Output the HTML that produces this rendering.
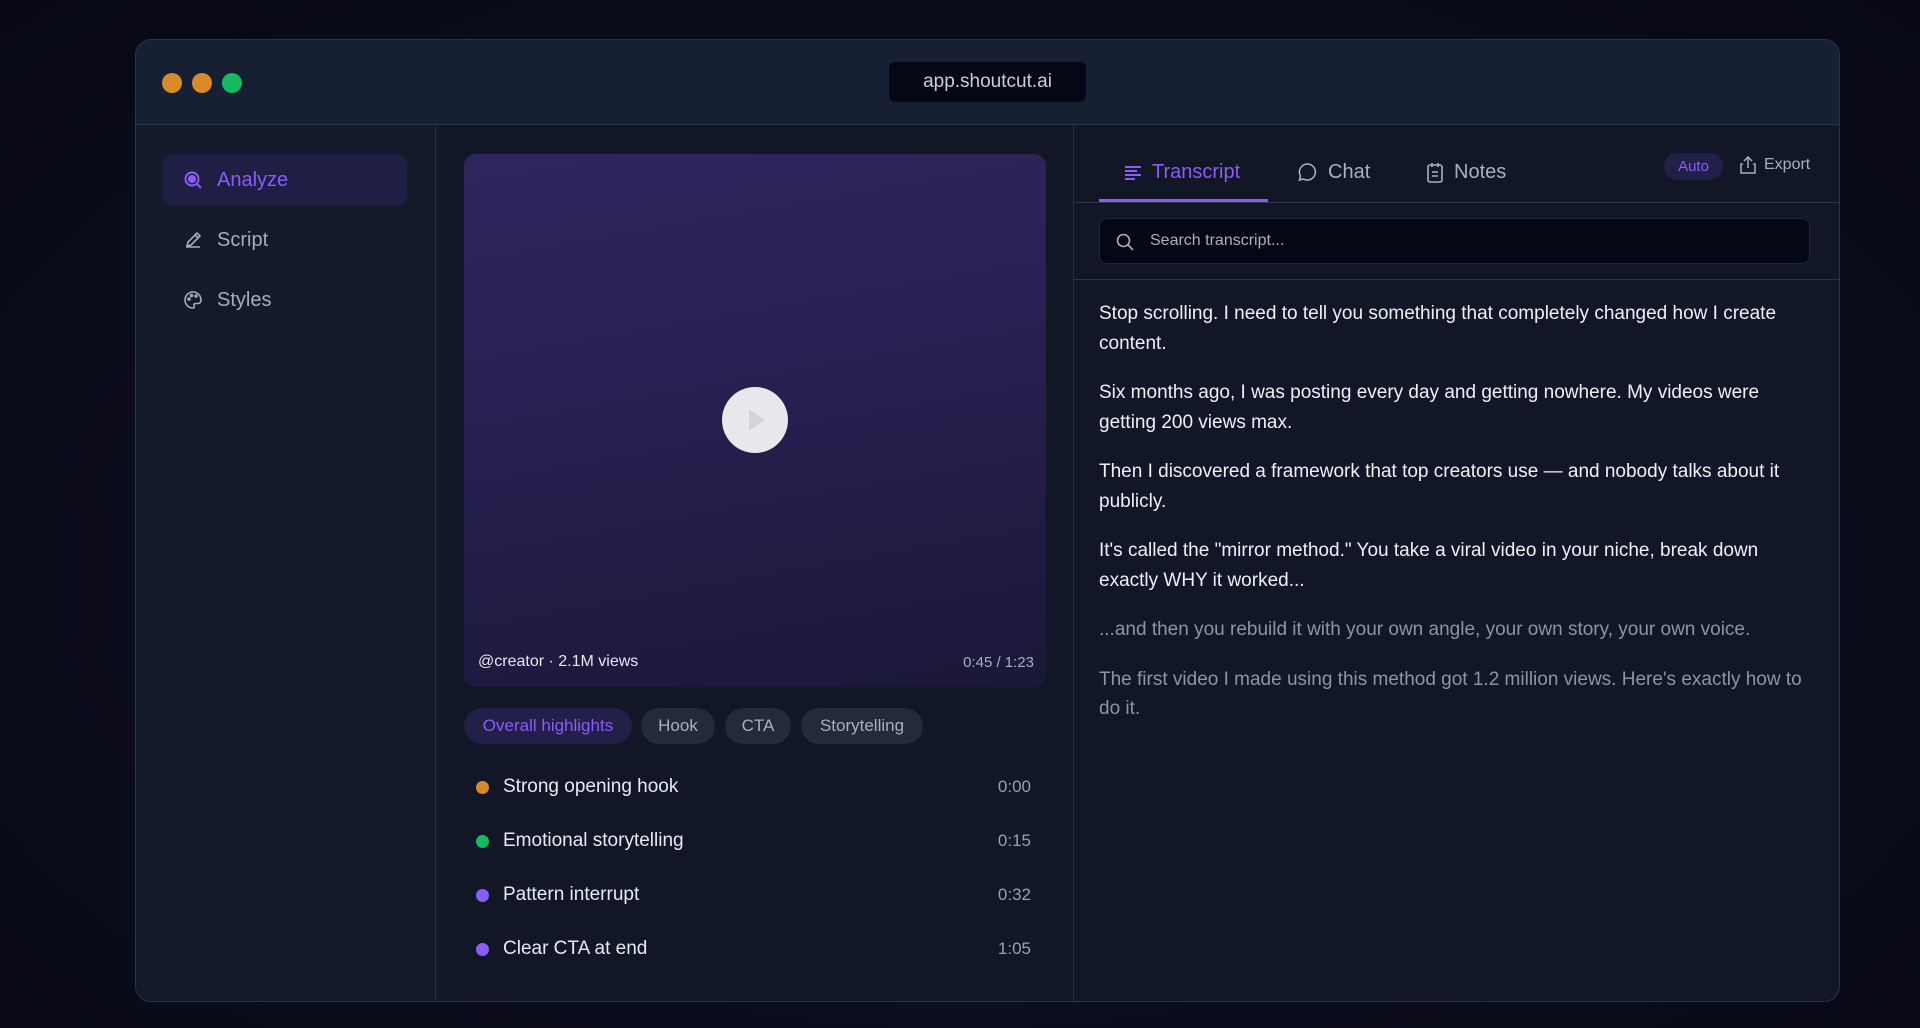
<!DOCTYPE html>
<html><head><meta charset="utf-8"><style>
*{box-sizing:border-box;margin:0;padding:0}
body{width:1920px;height:1028px;overflow:hidden;background:radial-gradient(ellipse at 50% 55%,#141530 0%,#0c0d1c 60%,#080914 100%);font-family:"Liberation Sans",sans-serif;position:relative}
.win{position:absolute;left:135px;top:39px;width:1705px;height:963px;border:1px solid #2a3346;border-radius:16px;background:#111726;overflow:hidden}
.tb{position:absolute;left:0;top:0;right:0;height:85px;background:#172033;border-bottom:1px solid #2c354a}
.dot{position:absolute;top:33px;width:20px;height:20px;border-radius:50%}
.url{position:absolute;left:753px;top:22px;width:197px;height:40px;background:#050814;border-radius:6px;color:#c9ced8;font-size:19px;text-align:center;line-height:40px}
.side{position:absolute;left:0;top:86px;width:300px;bottom:0;background:#131a29;border-right:1px solid #272f42}
.item{position:absolute;left:27px;width:244px;height:52px;border-radius:10px;font-size:20px;color:#a7adba;display:flex;align-items:center;padding-left:20px;gap:14px}
.item.act{background:#1f1f45;color:#8b5cf6}
.mid{position:absolute;left:300px;top:86px;width:638px;bottom:0;border-right:1px solid #272f42}
.video{position:absolute;left:28px;top:28px;width:582px;height:533px;border-radius:12px;background:linear-gradient(170deg,#30265f 0%,#271f50 45%,#1a1838 100%)}
.play{position:absolute;left:258px;top:233px;width:66px;height:66px;border-radius:50%;background:#e8e8ec}
.play:after{content:"";position:absolute;left:27px;top:22px;border-left:16px solid #d4d4da;border-top:11px solid transparent;border-bottom:11px solid transparent}
.cap{position:absolute;bottom:16px;font-size:16px;color:#e6e8ee}
.chip{position:absolute;top:582px;height:36px;border-radius:18px;background:#232a3a;color:#a9afbb;font-size:17px;line-height:36px;text-align:center}
.hl{position:absolute;left:40px;width:555px;font-size:19px;color:#e8eaf0;display:flex;align-items:center}
.hl i{width:13px;height:13px;border-radius:50%;margin-right:14px;display:inline-block}
.hl span.t{margin-left:auto;color:#9aa0ad;font-size:17px}
.right{position:absolute;left:938px;top:86px;right:0;bottom:0}
.tab{position:absolute;top:35px;font-size:20px;color:#a9afbb;display:flex;align-items:center;gap:10px}
p{font-size:19px;line-height:29.5px;color:#eef0f5;margin-bottom:20px}
p.dim{color:#8e94a2}
</style></head><body>
<div class="win">
 <div class="tb">
  <div class="dot" style="left:26px;background:#d98a2b"></div>
  <div class="dot" style="left:56px;background:#d98a2b"></div>
  <div class="dot" style="left:86px;background:#16b860"></div>
  <div class="url">app.shoutcut.ai</div>
 </div>
 <div class="side">
  <div class="item act" style="top:28px"><svg width="20" height="20" viewBox="0 0 20 20" fill="none" stroke="#8b5cf6" stroke-width="2"><circle cx="9" cy="9" r="6.5"/><circle cx="9" cy="9" r="3" fill="#8b5cf6"/><path d="M14 14l4 4"/></svg>Analyze</div>
  <div class="item" style="top:88px"><svg width="20" height="20" viewBox="0 0 20 20" fill="none" stroke="#a7adba" stroke-width="1.6"><path d="M3 17h14M4 16l1-4 9-9 3 3-9 9z M12 5l3 3"/></svg>Script</div>
  <div class="item" style="top:148px"><svg width="20" height="20" viewBox="0 0 20 20" fill="none" stroke="#a7adba" stroke-width="1.6"><path d="M10 2a8 8 0 1 0 0 16c1.5 0 1.5-1.5 1-2.5s0-2 1.5-2H15a3 3 0 0 0 3-3C18 5.5 14.5 2 10 2z"/><circle cx="6" cy="9" r="1"/><circle cx="8.5" cy="5.5" r="1"/><circle cx="13" cy="6" r="1"/></svg>Styles</div>
 </div>
 <div class="mid">
  <div class="video"><div class="play"></div>
   <div class="cap" style="left:14px">@creator · 2.1M views</div>
   <div class="cap" style="right:12px;color:#a9afbb;font-size:15px">0:45 / 1:23</div>
  </div>
  <div class="chip" style="left:28px;width:168px;background:#221f48;color:#8b5cf6">Overall highlights</div>
  <div class="chip" style="left:205px;width:74px">Hook</div>
  <div class="chip" style="left:289px;width:66px">CTA</div>
  <div class="chip" style="left:365px;width:122px">Storytelling</div>
  <div class="hl" style="top:650px"><i style="background:#d98a2b"></i>Strong opening hook<span class="t">0:00</span></div>
  <div class="hl" style="top:704px"><i style="background:#16b860"></i>Emotional storytelling<span class="t">0:15</span></div>
  <div class="hl" style="top:758px"><i style="background:#8b5cf6"></i>Pattern interrupt<span class="t">0:32</span></div>
  <div class="hl" style="top:812px"><i style="background:#8b5cf6"></i>Clear CTA at end<span class="t">1:05</span></div>
 </div>
 <div class="right">
  <div class="tab" style="left:50px;color:#8b5cf6"><svg width="18" height="16" viewBox="0 0 18 16" stroke="#8b5cf6" stroke-width="2"><path d="M1 2h16M1 6h12M1 10h16M1 14h10"/></svg>Transcript</div>
  <div style="position:absolute;left:25px;top:73px;width:169px;height:3px;background:#8b5cf6"></div>
  <div class="tab" style="left:223px"><svg width="21" height="21" viewBox="0 0 21 21" fill="none" stroke="#a9afbb" stroke-width="1.6"><path d="M10.5 2a8 8 0 1 1-4 15l-4 1 1-4a8 8 0 0 1 7-12z"/></svg>Chat</div>
  <div class="tab" style="left:352px"><svg width="18" height="21" viewBox="0 0 18 21" fill="none" stroke="#a9afbb" stroke-width="1.6"><rect x="2" y="3" width="14" height="17" rx="2"/><path d="M6 1v4M12 1v4M6 10h6M6 14h6"/></svg>Notes</div>
  <div style="position:absolute;left:590px;top:27px;width:59px;height:27px;border-radius:14px;background:#221f48;color:#8b5cf6;font-size:15px;line-height:27px;text-align:center">Auto</div>
  <div style="position:absolute;left:666px;top:30px;font-size:16px;color:#a9afbb;display:flex;gap:8px;align-items:center"><svg width="16" height="18" viewBox="0 0 16 18" fill="none" stroke="#a9afbb" stroke-width="1.5"><path d="M8 12V1M4 5l4-4 4 4M3 8H1v9h14V8h-2"/></svg>Export</div>
  <div style="position:absolute;left:0;right:0;top:76px;height:1px;background:#2c354a"></div>
  <div style="position:absolute;left:25px;top:92px;width:711px;height:46px;background:#050814;border:1px solid #1f2637;border-radius:8px;color:#a9afbb;font-size:16px;line-height:44px;padding-left:50px"><svg style="position:absolute;left:16px;top:14px" width="18" height="18" viewBox="0 0 18 18" fill="none" stroke="#a9afbb" stroke-width="1.6"><circle cx="7.5" cy="7.5" r="6"/><path d="M12 12l5 5"/></svg>Search transcript...</div>
  <div style="position:absolute;left:0;right:0;top:153px;height:1px;background:#2c354a"></div>
  <div style="position:absolute;left:25px;top:173px;width:705px">
   <p>Stop scrolling. I need to tell you something that completely changed how I create content.</p>
   <p>Six months ago, I was posting every day and getting nowhere. My videos were getting 200 views max.</p>
   <p>Then I discovered a framework that top creators use — and nobody talks about it publicly.</p>
   <p>It's called the "mirror method." You take a viral video in your niche, break down exactly WHY it worked...</p>
   <p class="dim">...and then you rebuild it with your own angle, your own story, your own voice.</p>
   <p class="dim">The first video I made using this method got 1.2 million views. Here's exactly how to do it.</p>
  </div>
 </div>
</div>
</body></html>
